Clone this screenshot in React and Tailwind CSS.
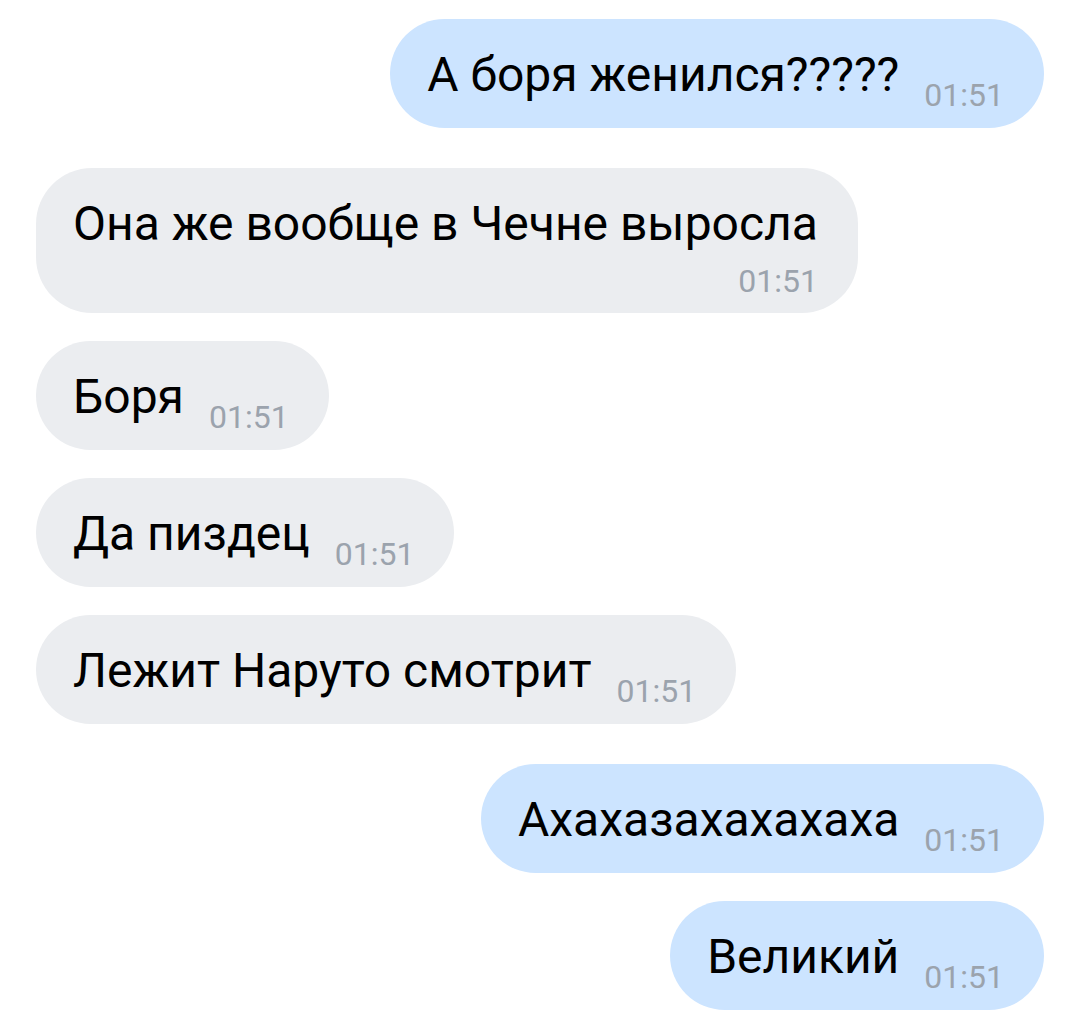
const messages = [
  { id: 1, out: true, text: "А боря женился?????", time: "01:51" },
  { id: 2, out: false, text: "Она же вообще в Чечне выросла", time: "01:51", wrap: true },
  { id: 3, out: false, text: "Боря", time: "01:51" },
  { id: 4, out: false, text: "Да пиздец", time: "01:51" },
  { id: 5, out: false, text: "Лежит Наруто смотрит", time: "01:51" },
  { id: 6, out: true, text: "Ахахазахахахаха", time: "01:51" },
  { id: 7, out: true, text: "Великий", time: "01:51" },
];

function Bubble({ msg }) {
  const color = msg.out ? "bg-[#cce4ff]" : "bg-[#ebedf0]";

  // long message: time goes under the text, right-aligned
  if (msg.wrap) {
    return (
      <div className={`flex flex-col rounded-[56px] ${color} pl-[37px] pr-[40px] pt-[28px] pb-[16px]`}>
        <span className="text-[48px] leading-[56px] text-black">{msg.text}</span>
        <span className="self-end mt-[13px] text-[32px] leading-none text-[#9ba3ad]">
          {msg.time}
        </span>
      </div>
    );
  }

  return (
    <div className={`flex items-end gap-[25px] rounded-full ${color} pl-[37px] pr-[40px] pt-[28px] pb-[25px]`}>
      <span className="text-[48px] leading-[56px] text-black">{msg.text}</span>
      <span className="mb-[-8px] text-[32px] leading-none text-[#9ba3ad]">{msg.time}</span>
    </div>
  );
}

export default function App() {
  return (
    <div
      className="w-[1076px] h-[1028px] bg-white pt-[19px] pl-[36px] pr-[32px] flex flex-col"
      style={{ fontFamily: "Roboto, 'Noto Sans', sans-serif" }}
    >
      {messages.map((msg, i) => {
        const prev = messages[i - 1];
        const gap = !prev ? "" : prev.out !== msg.out ? "mt-[40px]" : "mt-[28px]";
        return (
          <div key={msg.id} className={`flex ${msg.out ? "justify-end" : "justify-start"} ${gap}`}>
            <Bubble msg={msg} />
          </div>
        );
      })}
    </div>
  );
}
